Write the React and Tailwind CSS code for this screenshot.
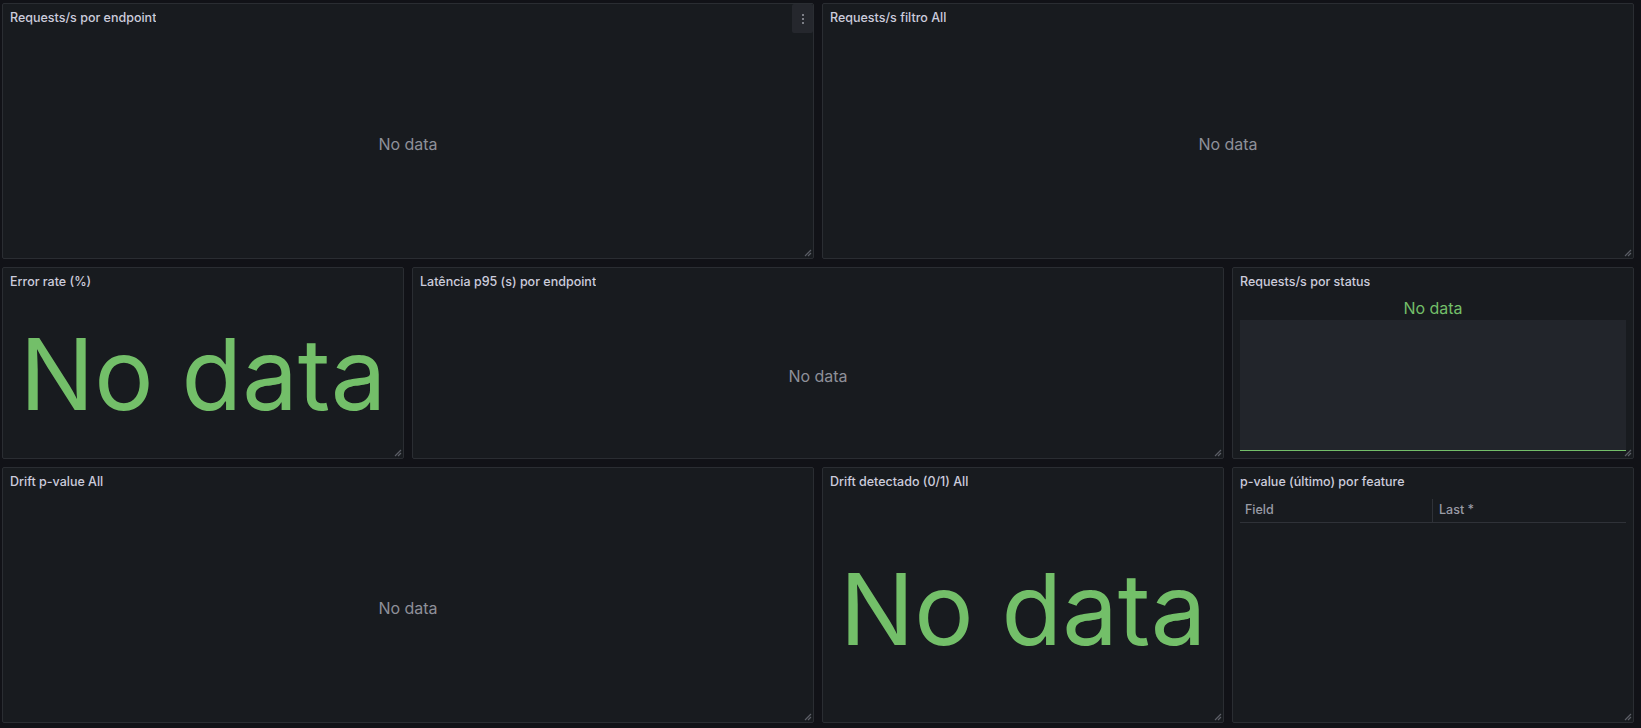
import React from 'react';

const font = { fontFamily: 'Inter, "Noto Sans", sans-serif' };

const ResizeHandle = () => (
  <svg className="absolute right-[1px] bottom-[1px]" width="10" height="10" viewBox="0 0 10 10">
    <path d="M9 3 L3 9 M9 6 L6 9" stroke="#5b5e66" strokeWidth="1.2" fill="none" />
  </svg>
);

const Panel = ({ title, className = '', menu = false, children }) => (
  <div className={`relative flex flex-col min-w-0 bg-[#181b1f] border border-[#2a2d32] rounded-[2px] ${className}`}>
    <div className="h-[28px] shrink-0 flex items-center pl-[7px] pr-2">
      <h2 className="text-[12.5px] font-medium text-[#ccccdc] truncate">{title}</h2>
    </div>
    {menu && (
      <div className="absolute right-0 top-0 w-[21px] h-[29px] bg-[#25272d] rounded-[2px] flex flex-col items-center justify-center gap-[2px]">
        <span className="w-[2px] h-[2px] rounded-full bg-[#9a9ca5]" />
        <span className="w-[2px] h-[2px] rounded-full bg-[#9a9ca5]" />
        <span className="w-[2px] h-[2px] rounded-full bg-[#9a9ca5]" />
      </div>
    )}
    <div className="flex-1 min-h-0 flex flex-col">{children}</div>
    <ResizeHandle />
  </div>
);

const NoData = () => (
  <div className="flex-1 flex items-center justify-center pb-[2px] text-[16px] text-[#8e9099]">No data</div>
);

const BigNoData = () => (
  <div className="flex-1 flex items-center justify-center">
    <span className="text-[99px] leading-none text-[#73bf69] whitespace-nowrap">No data</span>
  </div>
);

export default function App() {
  return (
    <div style={font} className="w-[1641px] h-[728px] bg-[#111217] pl-[2px] pr-[7px] pt-[3px] overflow-hidden">
      <div className="grid grid-cols-[repeat(24,minmax(0,1fr))] grid-rows-[256px_192px_256px] gap-2 w-[1632px]">
        <Panel title="Requests/s por endpoint" className="col-span-12" menu>
          <NoData />
        </Panel>
        <Panel title="Requests/s filtro All" className="col-span-12">
          <NoData />
        </Panel>

        <Panel title="Error rate (%)" className="col-span-6">
          <div className="flex-1 flex items-center justify-center pb-[6px]">
            <span className="text-[99px] leading-none text-[#73bf69] whitespace-nowrap">No data</span>
          </div>
        </Panel>
        <Panel title="Latência p95 (s) por endpoint" className="col-span-12">
          <NoData />
        </Panel>
        <Panel title="Requests/s por status" className="col-span-6">
          <div className="flex-1 flex flex-col px-[7px] pb-[7px]">
            <div className="h-[24px] shrink-0 flex items-center justify-center text-[16px] text-[#73bf69]">No data</div>
            <div className="flex-1 bg-[#22252b] border-b border-[#73bf69]" />
          </div>
        </Panel>

        <Panel title="Drift p-value All" className="col-span-12">
          <NoData />
        </Panel>
        <Panel title="Drift detectado (0/1) All" className="col-span-6">
          <BigNoData />
        </Panel>
        <Panel title="p-value (último) por feature" className="col-span-6">
          <div className="flex-1 px-[7px]">
            <div className="mt-[3px] flex h-[24px] border-b border-[#2f3238] text-[12.5px] font-medium text-[#9a9ca6]">
              <div className="flex-1 flex items-center pl-[5px]">Field</div>
              <div className="flex-1 flex items-center pl-[6px] border-l border-[#2f3238]">Last *</div>
            </div>
          </div>
        </Panel>
      </div>
    </div>
  );
}
